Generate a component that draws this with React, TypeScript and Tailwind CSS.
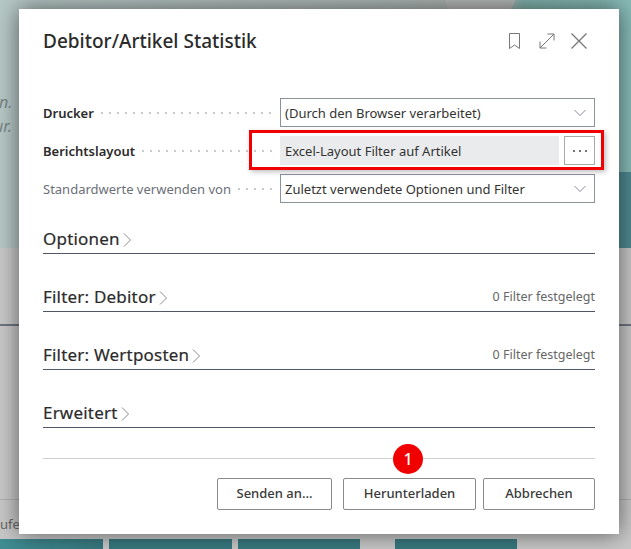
import type { ReactNode } from 'react'

const font = "font-['Noto_Sans',sans-serif]"

function Leader() {
  return (
    <div className="ml-1 mr-[6px] h-1 flex-1 bg-[radial-gradient(circle,#c9c9c9_1px,transparent_1.3px)] bg-[length:8px_4px]" />
  )
}

function FieldRow({ label, bold, children }: { label: string; bold?: boolean; children: ReactNode }) {
  return (
    <div className="flex h-[29px] items-center">
      <span className={bold ? 'pt-[2px] text-[13px] font-semibold text-[#2b2b2b]' : 'pt-[2px] text-[13px] text-[#6b7078]'}>{label}</span>
      <Leader />
      <div className="flex h-full w-[315px] shrink-0 gap-[5px]">{children}</div>
    </div>
  )
}

function SelectBox({ value }: { value: string }) {
  return (
    <div className="flex h-full flex-1 items-center justify-between border border-[#8a929e] pl-1 pr-[8px] text-[13px] text-[#333]">
      <span className="pt-[2px]">{value}</span>
      <svg className="h-[8px] w-[12px] text-[#858d99]" viewBox="0 0 12 8" fill="none" stroke="currentColor" strokeWidth="1">
        <path d="M0.5 1 L6 6.5 L11.5 1" />
      </svg>
    </div>
  )
}

function Section({ title, note }: { title: string; note?: boolean }) {
  return (
    <div className="flex h-[29px] items-center justify-between border-b border-[#505868]">
      <div className="flex items-center gap-[3px]">
        <span className="text-[17px] tracking-[0.2px] text-[#2b2b2b] [-webkit-text-stroke:0.2px_#2b2b2b]">{title}</span>
        <svg className="mt-[1px] h-[14px] w-[9px] text-[#8a8a8a]" viewBox="0 0 9 14" fill="none" stroke="currentColor" strokeWidth="1">
          <path d="M1 0.5 L7.5 7 L1 13.5" />
        </svg>
      </div>
      {note && <span className="text-[12.5px] text-[#666]">0 Filter festgelegt</span>}
    </div>
  )
}

function Btn({ label, width }: { label: string; width: string }) {
  return (
    <div className={`flex h-8 items-center justify-center rounded-[2px] border border-[#8a8a8a] text-[13px] font-medium text-[#3a3a3a] ${width}`}>
      {label}
    </div>
  )
}

export default function App() {
  return (
    <div className={`relative h-[549px] w-[631px] overflow-hidden bg-[#c8c8c8] ${font}`}>
      {/* page behind the dialog */}
      <div className="relative h-[248px] bg-[linear-gradient(90deg,#b6c8c6_0%,#aab2b0_80%,#7fb0ab_83%,#88bcb8_100%)]">
        <div className="absolute bottom-0 right-0 h-[76px] w-[120px] bg-[#4e8a92]" />
        <div className="absolute left-[445px] top-[-14px] h-[26px] w-[70px] rounded-full bg-[#b4b8b6]" />
        <div className="flex flex-col gap-1 pt-[92px] text-[16px] italic leading-[20px] text-[#7a8686]">
          <span className="-ml-[1px]">n.</span>
          <span className="-ml-[6px]">ur.</span>
        </div>
      </div>
      <div className="h-[78px] border-b-2 border-[#6e7480]" />
      <div className="h-[174px] border-b border-[#b0b0b0]" />
      <div className="mt-[15px] text-[13px] leading-[18px] text-[#666]">ufer</div>
      <div className="absolute bottom-0 left-0 flex h-[10px] gap-[6px]">
        <div className="w-[103px] bg-[linear-gradient(90deg,#3f8d92,#37797f)]" />
        <div className="w-[123px] bg-[#37797f]" />
        <div className="w-[122px] bg-[#37797f]" />
        <div className="ml-[29px] w-[122px] bg-[#37797f]" />
      </div>

      {/* dialog */}
      <div className="absolute left-[19px] top-[9px] flex h-[525px] w-[600px] flex-col bg-white px-6 shadow-[0_0_22px_rgba(0,0,0,0.55)]">
        <div className="flex h-[63px] items-center justify-between">
          <h1 className="pt-[2px] text-[19px] font-medium text-[#2b2b2b]">Debitor/Artikel Statistik</h1>
          <div className="mr-[8px] flex items-center text-[#777]">
            <svg className="h-[16px] w-[11px]" viewBox="0 0 11 16" fill="none" stroke="currentColor" strokeWidth="1">
              <path d="M0.5 0.5 H10.5 V15.5 L5.5 12 L0.5 15.5 Z" />
            </svg>
            <svg className="ml-[19px] h-[16px] w-[16px]" viewBox="0 0 16 16" fill="none" stroke="currentColor" strokeWidth="1">
              <path d="M1 15 L15 1 M8.5 1 H15 V7.5 M1 8.5 V15 H7.5" />
            </svg>
            <svg className="ml-[16px] h-[16px] w-[16px]" viewBox="0 0 16 16" fill="none" stroke="currentColor" strokeWidth="1.3">
              <path d="M0.5 0.5 L15.5 15.5 M15.5 0.5 L0.5 15.5" />
            </svg>
          </div>
        </div>
        <div className="mt-[26px] flex flex-col gap-[9px]">
          <FieldRow label="Drucker" bold>
            <SelectBox value="(Durch den Browser verarbeitet)" />
          </FieldRow>
          <FieldRow label="Berichtslayout" bold>
            <div className="flex flex-1 items-center bg-[#eaebed] pl-[5px] pt-[2px] text-[13px] text-[#333]">Excel-Layout Filter auf Artikel</div>
            <div className="flex w-[31px] items-center justify-center gap-[4px] border border-[#a8a8a8]">
              <span className="h-[2px] w-[2px] rounded-full bg-[#444]" />
              <span className="h-[2px] w-[2px] rounded-full bg-[#444]" />
              <span className="h-[2px] w-[2px] rounded-full bg-[#444]" />
            </div>
          </FieldRow>
          <FieldRow label="Standardwerte verwenden von">
            <SelectBox value="Zuletzt verwendete Optionen und Filter" />
          </FieldRow>
        </div>
        <div className="mt-[22px] flex flex-col gap-[29px]">
          <Section title="Optionen" />
          <Section title="Filter: Debitor" note />
          <Section title="Filter: Wertposten" note />
          <Section title="Erweitert" />
        </div>
        <div className="mt-[30px] border-t border-[#cfcfcf]" />
        <div className="mt-[19px] flex justify-end">
          <Btn label="Senden an..." width="w-[115px]" />
          <Btn label="Herunterladen" width="ml-[11px] w-[133px]" />
          <Btn label="Abbrechen" width="ml-[7px] w-[112px]" />
        </div>
      </div>

      {/* annotations */}
      <div className="absolute left-[249px] top-[130px] h-[40px] w-[355px] border-[3px] border-[#f00000] shadow-[2px_2px_5px_rgba(0,0,0,0.25)]" />
      <div className="absolute left-[393px] top-[444px] flex h-[30px] w-[30px] items-center justify-center rounded-full bg-[#f00000] text-[16px] font-medium text-white">1</div>
    </div>
  )
}
